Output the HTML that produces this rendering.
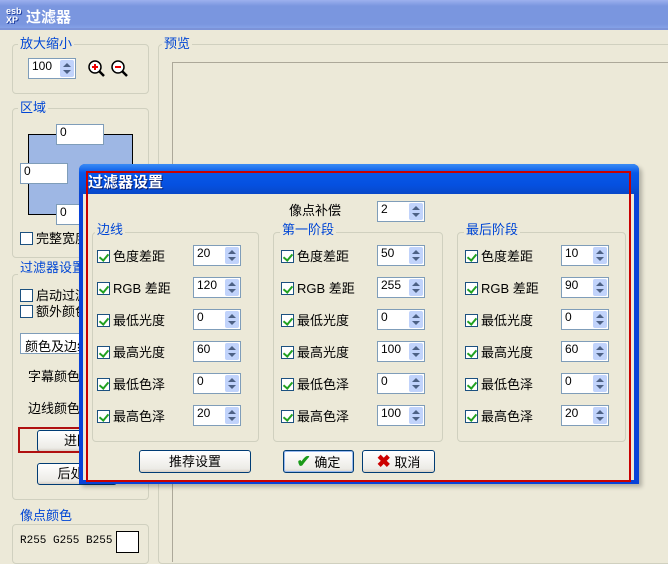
<!DOCTYPE html>
<html><head><meta charset="utf-8"><style>
*{box-sizing:border-box;margin:0;padding:0}
body{width:668px;height:557px;overflow:hidden;background:#ECE9D8;font-family:"Liberation Sans","Noto Sans CJK SC",sans-serif;font-size:13px;color:#000;position:relative}
.a{position:absolute}
.gb{position:absolute;border:1px solid #D0D0BF;border-radius:4px}
.gl{position:absolute;color:#0046D5;background:#ECE9D8;padding:0 2px;font-size:13px;line-height:15px}
.sp{position:absolute;width:48px;height:21px;background:#fff;border:1px solid #7F9DB9;font-size:12px;line-height:15px;padding-left:3px}
.sp i{position:absolute;right:1px;top:1px;width:14px;height:17px;background:#C1D3FB;border-radius:2px}
.sp i:before{content:"";position:absolute;left:3px;top:3px;border:4px solid transparent;border-bottom:4px solid #4D6185;border-top:0}
.sp i:after{content:"";position:absolute;left:3px;top:10px;border:4px solid transparent;border-top:4px solid #4D6185;border-bottom:0}
.cb{position:absolute;width:13px;height:13px;border:1px solid #1C5180;background:#fff}
.cb.k:after{content:"";position:absolute;left:3px;top:1px;width:4px;height:7px;border:solid #21A121;border-width:0 2px 2px 0;transform:rotate(40deg)}
.t{position:absolute;font-size:13px;line-height:14px;white-space:nowrap}
.bt{position:absolute;border:1px solid #003C74;border-radius:3px;background:linear-gradient(#fff,#ECEBE6 85%,#D6D0C5);text-align:center;font-size:13px}
</style></head><body>
<div class="a" style="left:0;top:0;width:668px;height:30px;background:linear-gradient(#9DB0EE,#7A96DF 20%,#7A96DF 80%,#8AA8EA);"></div>
<div class="a" style="left:0;top:28px;width:668px;height:2px;background:#7C93D8"></div>
<div class="a" style="left:6px;top:7px;color:#fff;font-size:9px;font-weight:bold;line-height:9px;text-shadow:1px 1px #2040a0">esb<br>XP</div>
<div class="a" style="left:26px;top:6px;color:#fff;font-weight:bold;font-size:15px">过滤器</div>

<div class="gb" style="left:12px;top:44px;width:137px;height:50px"></div><div class="gl" style="left:18px;top:36px">放大缩小</div>
<div class="sp" style="left:28px;top:58px;width:48px"><span>100</span><i></i></div>
<svg class="a" style="left:87px;top:59px" width="20" height="20"><circle cx="8" cy="8" r="6" fill="#fff" stroke="#000" stroke-width="1.5"/><line x1="12" y1="12" x2="17" y2="17" stroke="#000" stroke-width="2.5"/><path d="M5 8h6M8 5v6" stroke="#e00" stroke-width="2"/></svg>
<svg class="a" style="left:110px;top:59px" width="20" height="20"><circle cx="8" cy="8" r="6" fill="#fff" stroke="#000" stroke-width="1.5"/><line x1="12" y1="12" x2="17" y2="17" stroke="#000" stroke-width="2.5"/><path d="M5 8h6" stroke="#e00" stroke-width="2"/></svg>

<div class="gb" style="left:12px;top:108px;width:137px;height:150px"></div><div class="gl" style="left:18px;top:100px">区域</div>
<div class="a" style="left:28px;top:134px;width:105px;height:81px;background:#9EB7E4;border:1px solid #000"></div>
<div class="sp" style="left:56px;top:124px"><span>0</span></div>
<div class="sp" style="left:20px;top:163px"><span>0</span></div>
<div class="sp" style="left:56px;top:204px"><span>0</span></div>
<div class="cb" style="left:20px;top:232px"></div><div class="t" style="left:36px;top:232px">完整宽度</div>

<div class="gb" style="left:12px;top:274px;width:137px;height:226px"></div><div class="gl" style="left:18px;top:260px">过滤器设置</div>
<div class="cb" style="left:20px;top:289px"></div><div class="t" style="left:36px;top:289px">启动过滤</div>
<div class="cb" style="left:20px;top:305px"></div><div class="t" style="left:36px;top:305px">额外颜色</div>
<div class="a" style="left:20px;top:333px;width:110px;height:21px;background:#fff;border:1px solid #7F9DB9;padding:2px 4px">颜色及边线</div>
<div class="t" style="left:28px;top:370px">字幕颜色</div>
<div class="t" style="left:28px;top:402px">边线颜色</div>
<div class="bt" style="left:37px;top:430px;width:80px;height:22px;line-height:20px">进阶</div>
<div class="a" style="left:18px;top:427px;width:76px;height:26px;border:2px solid #B01010"></div>
<div class="bt" style="left:37px;top:463px;width:80px;height:22px;line-height:20px">后处理</div>

<div class="gb" style="left:12px;top:524px;width:137px;height:40px"></div><div class="gl" style="left:18px;top:508px">像点颜色</div>
<div class="t" style="left:20px;top:534px;font-family:'Liberation Mono',monospace;font-size:11px">R255 G255 B255</div>
<div class="a" style="left:116px;top:531px;width:23px;height:22px;background:#fff;border:1px solid #000"></div>

<div class="gb" style="left:158px;top:44px;width:520px;height:520px"></div><div class="gl" style="left:162px;top:36px">预览</div>
<div class="a" style="left:172px;top:62px;width:500px;height:500px;border-left:1px solid #ACA899;border-top:1px solid #ACA899"></div>

<div class="a" style="left:79px;top:164px;width:560px;height:320px;background:#0842D8;border-radius:6px 6px 0 0;box-shadow:3px 3px 4px rgba(0,0,0,.25)"></div>
<div class="a" style="left:79px;top:164px;width:560px;height:30px;background:linear-gradient(#3B8CF5,#0758E8 30%,#0550E0 70%,#0848C8);border-radius:6px 6px 0 0"></div>
<div class="a" style="left:83px;top:194px;width:551px;height:286px;background:#ECE9D8"></div>
<div class="a" style="left:88px;top:171px;color:#fff;font-weight:bold;font-size:15px;text-shadow:1px 1px #0a1e6a">过滤器设置</div>
<div class="a" style="left:86px;top:171px;width:545px;height:311px;border:2px solid #C80000"></div>

<div class="t" style="left:289px;top:204px">像点补偿</div>
<div class="sp" style="left:377px;top:201px"><span>2</span><i></i></div>

<div class="gb" style="left:92px;top:232px;width:167px;height:210px"></div><div class="gl" style="left:95px;top:222px">边线</div>
<div class="gb" style="left:273px;top:232px;width:170px;height:210px"></div><div class="gl" style="left:280px;top:222px">第一阶段</div>
<div class="gb" style="left:457px;top:232px;width:169px;height:210px"></div><div class="gl" style="left:464px;top:222px">最后阶段</div>

<div class="cb k" style="left:97px;top:250px"></div><div class="t" style="left:113px;top:250px">色度差距</div><div class="sp" style="left:193px;top:245px"><span>20</span><i></i></div>
<div class="cb k" style="left:97px;top:282px"></div><div class="t" style="left:113px;top:282px">RGB 差距</div><div class="sp" style="left:193px;top:277px"><span>120</span><i></i></div>
<div class="cb k" style="left:97px;top:314px"></div><div class="t" style="left:113px;top:314px">最低光度</div><div class="sp" style="left:193px;top:309px"><span>0</span><i></i></div>
<div class="cb k" style="left:97px;top:346px"></div><div class="t" style="left:113px;top:346px">最高光度</div><div class="sp" style="left:193px;top:341px"><span>60</span><i></i></div>
<div class="cb k" style="left:97px;top:378px"></div><div class="t" style="left:113px;top:378px">最低色泽</div><div class="sp" style="left:193px;top:373px"><span>0</span><i></i></div>
<div class="cb k" style="left:97px;top:410px"></div><div class="t" style="left:113px;top:410px">最高色泽</div><div class="sp" style="left:193px;top:405px"><span>20</span><i></i></div>

<div class="cb k" style="left:281px;top:250px"></div><div class="t" style="left:297px;top:250px">色度差距</div><div class="sp" style="left:377px;top:245px"><span>50</span><i></i></div>
<div class="cb k" style="left:281px;top:282px"></div><div class="t" style="left:297px;top:282px">RGB 差距</div><div class="sp" style="left:377px;top:277px"><span>255</span><i></i></div>
<div class="cb k" style="left:281px;top:314px"></div><div class="t" style="left:297px;top:314px">最低光度</div><div class="sp" style="left:377px;top:309px"><span>0</span><i></i></div>
<div class="cb k" style="left:281px;top:346px"></div><div class="t" style="left:297px;top:346px">最高光度</div><div class="sp" style="left:377px;top:341px"><span>100</span><i></i></div>
<div class="cb k" style="left:281px;top:378px"></div><div class="t" style="left:297px;top:378px">最低色泽</div><div class="sp" style="left:377px;top:373px"><span>0</span><i></i></div>
<div class="cb k" style="left:281px;top:410px"></div><div class="t" style="left:297px;top:410px">最高色泽</div><div class="sp" style="left:377px;top:405px"><span>100</span><i></i></div>

<div class="cb k" style="left:465px;top:250px"></div><div class="t" style="left:481px;top:250px">色度差距</div><div class="sp" style="left:561px;top:245px"><span>10</span><i></i></div>
<div class="cb k" style="left:465px;top:282px"></div><div class="t" style="left:481px;top:282px">RGB 差距</div><div class="sp" style="left:561px;top:277px"><span>90</span><i></i></div>
<div class="cb k" style="left:465px;top:314px"></div><div class="t" style="left:481px;top:314px">最低光度</div><div class="sp" style="left:561px;top:309px"><span>0</span><i></i></div>
<div class="cb k" style="left:465px;top:346px"></div><div class="t" style="left:481px;top:346px">最高光度</div><div class="sp" style="left:561px;top:341px"><span>60</span><i></i></div>
<div class="cb k" style="left:465px;top:378px"></div><div class="t" style="left:481px;top:378px">最低色泽</div><div class="sp" style="left:561px;top:373px"><span>0</span><i></i></div>
<div class="cb k" style="left:465px;top:410px"></div><div class="t" style="left:481px;top:410px">最高色泽</div><div class="sp" style="left:561px;top:405px"><span>20</span><i></i></div>

<div class="bt" style="left:139px;top:450px;width:112px;height:23px;line-height:21px">推荐设置</div>
<div class="bt" style="left:283px;top:450px;width:71px;height:23px;line-height:21px;box-shadow:inset 0 0 0 1px #97B8EE"><span style="color:#1a9a1a;font-weight:bold;font-size:17px">✔</span> 确定</div>
<div class="bt" style="left:362px;top:450px;width:73px;height:23px;line-height:21px"><span style="color:#C00;font-weight:bold;font-size:17px">✖</span> 取消</div>
</body></html>
